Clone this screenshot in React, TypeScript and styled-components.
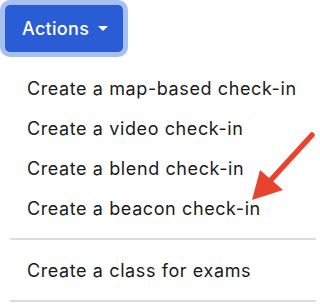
import React from 'react';
import styled, { createGlobalStyle } from 'styled-components';

const GlobalStyle = createGlobalStyle`
  html, body {
    margin: 0;
    padding: 0;
    background: #ffffff;
  }
  body {
    font-family: Inter, "Liberation Sans", Arial, sans-serif;
    -webkit-font-smoothing: antialiased;
  }
`;

const items = [
  'Create a map-based check-in',
  'Create a video check-in',
  'Create a blend check-in',
  'Create a beacon check-in',
];

const App = () => {
  return (
    <Page>
      <GlobalStyle />
      <ActionsButton type="button">
        Actions
        <Caret />
      </ActionsButton>
      <Menu>
        {items.map((label) => (
          <MenuItem key={label}>{label}</MenuItem>
        ))}
        <Divider />
        <MenuItem>Create a class for exams</MenuItem>
        <Divider />
      </Menu>
      <Arrow width="80" height="85" viewBox="0 0 80 85">
        <line x1="72" y1="10" x2="30" y2="56" stroke="#e8432f" strokeWidth="5.5" strokeLinecap="round" />
        <polygon points="12,75 20,45 43,65" fill="#e8432f" />
      </Arrow>
    </Page>
  );
};

export default App;

const Page = styled.div`
  position: relative;
  width: 320px;
  height: 306px;
  overflow: hidden;
  padding: 5px 0 0 5px;
  box-sizing: border-box;
`;

const ActionsButton = styled.button`
  display: inline-flex;
  align-items: center;
  box-sizing: border-box;
  width: 118px;
  height: 47px;
  padding: 0 0 0 17px;
  border: none;
  border-radius: 5px;
  background: #2a5cd6;
  color: #ffffff;
  font-family: inherit;
  font-size: 18px;
  font-weight: 500;
  letter-spacing: 0.3px;
  box-shadow: 0 0 0 5px #a7c0f2, 2px 6px 3px -2px rgba(0, 0, 0, 0.12);
  cursor: pointer;
`;

const Caret = styled.span`
  display: inline-block;
  margin-left: 9px;
  width: 0;
  height: 0;
  border-top: 5.5px solid #ffffff;
  border-left: 5.5px solid transparent;
  border-right: 5.5px solid transparent;
`;

const Menu = styled.div`
  display: flex;
  flex-direction: column;
  margin: 16px 0 0 5px;
  width: 306px;
`;

const MenuItem = styled.div`
  display: flex;
  align-items: center;
  height: 40px;
  padding-left: 17px;
  font-size: 18px;
  letter-spacing: 0.6px;
  color: #1a1a1a;
`;

const Divider = styled.div`
  height: 2px;
  background: #dcdcdc;
  margin: 10px 0;
`;

const Arrow = styled.svg`
  position: absolute;
  left: 240px;
  top: 125px;
`;
